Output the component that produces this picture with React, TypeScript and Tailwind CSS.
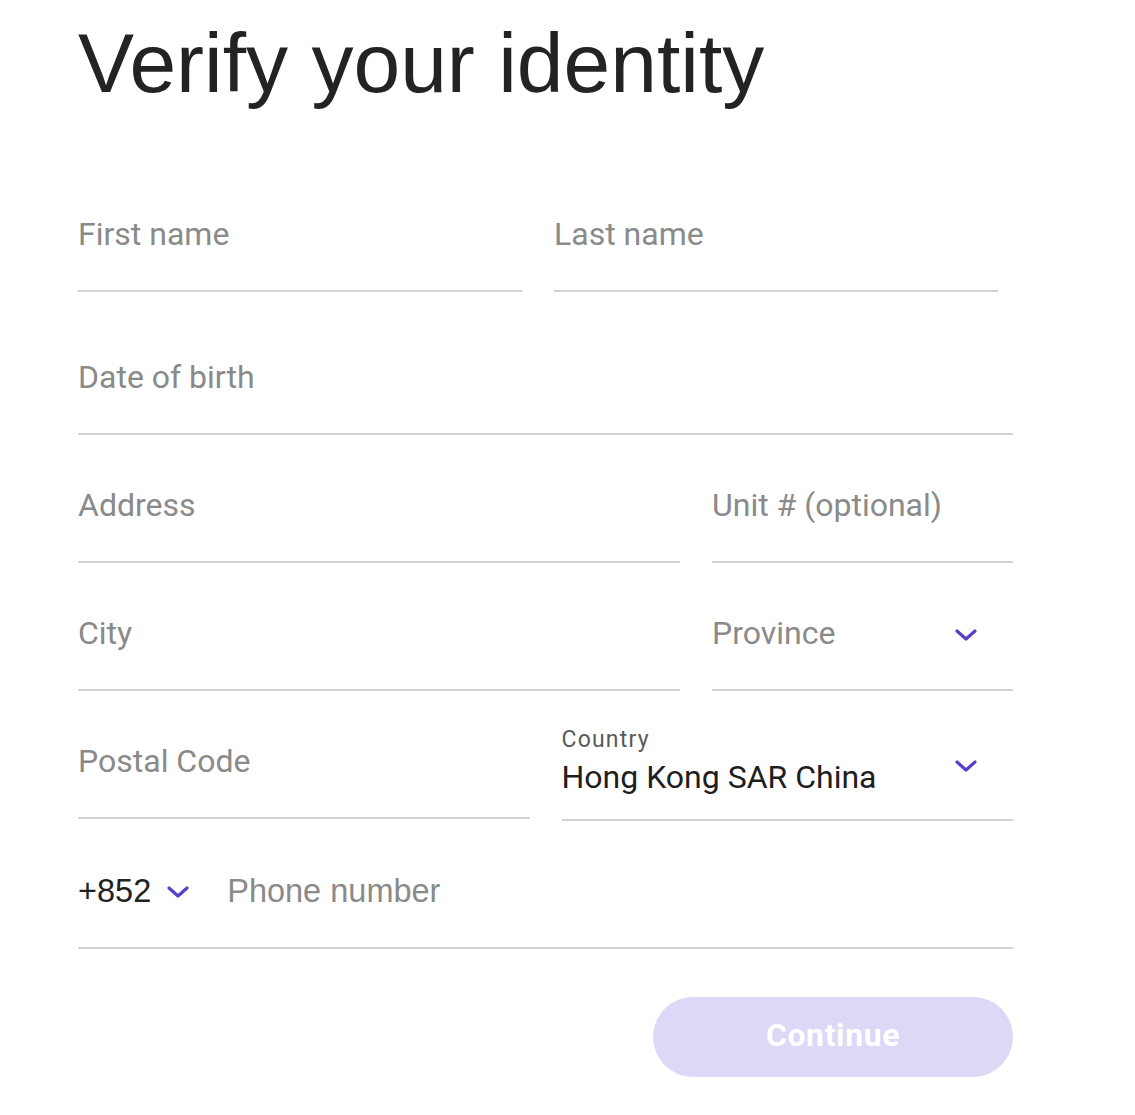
import React from "react";

const Chevron = ({ className = "" }: { className?: string }) => (
  <svg width="22" height="12" viewBox="0 0 22 12" className={className} fill="none">
    <path d="M2 2 L11 10 L20 2" stroke="#5a3fc8" strokeWidth="3.2" strokeLinecap="round" strokeLinejoin="round" />
  </svg>
);

const Field = ({ label, className = "", chevron = false }: { label: string; className?: string; chevron?: boolean }) => (
  <div className={`border-b-2 border-[#d3d3d3] pb-[36px] flex items-start ${className}`}>
    <span className="flex-1 text-[32px] leading-[40px] text-[#8a8a8a] [font-family:Roboto,'Noto_Sans',sans-serif]">
      {label}
    </span>
    {chevron && <Chevron className="mt-[16px] mr-[36px]" />}
  </div>
);

export default function App() {
  return (
    <div className="bg-white min-h-[1115px] w-[1135px] pl-[78px] pt-[21px]">
      <h1 className="text-[84px] leading-[84px] text-[#232323] [font-family:'Liberation_Sans',Arial,sans-serif] font-normal">
        Verify your identity
      </h1>
      <div className="w-[935px] mt-[109px] flex flex-col">
        <div className="w-[920px] grid grid-cols-2 gap-x-8">
          <Field label="First name" />
          <Field label="Last name" />
        </div>
        <div className="mt-[65px]">
          <Field label="Date of birth" />
        </div>
        <div className="mt-[50px] grid grid-cols-[1fr_301px] gap-x-8">
          <Field label="Address" />
          <Field label="Unit # (optional)" />
        </div>
        <div className="mt-[50px] grid grid-cols-[1fr_301px] gap-x-8">
          <Field label="City" />
          <Field label="Province" chevron />
        </div>
        <div className="mt-[50px] grid grid-cols-2 gap-x-8 items-start">
          <Field label="Postal Code" />
          <div className="-mt-[14px] border-b-2 border-[#d3d3d3] pb-[22px] flex items-start">
            <div className="flex-1 flex flex-col gap-[4px] [font-family:Roboto,'Noto_Sans',sans-serif]">
              <span className="text-[23px] leading-[26px] text-[#5a5a5a] tracking-[1.2px]">Country</span>
              <span className="text-[32px] leading-[40px] text-[#1e1e1e]">Hong Kong SAR China</span>
            </div>
            <Chevron className="mt-[33px] mr-[36px]" />
          </div>
        </div>
        <div className="mt-[50px] border-b-2 border-[#d3d3d3] pb-[36px] flex items-center [font-family:'Liberation_Sans',Arial,sans-serif]">
          <span className="text-[32.5px] leading-[40px] text-[#222]">+852</span>
          <Chevron className="ml-[16px] mt-[2px]" />
          <span className="ml-[38px] text-[32.5px] leading-[40px] text-[#8a8a8a]">Phone number</span>
        </div>
        <div className="mt-[48px] flex justify-end">
          <button className="w-[360px] h-[80px] rounded-full bg-[#dcd8f6] text-white text-[32px] leading-[40px] tracking-[0.6px] font-bold pb-[4px] [font-family:Roboto,'Noto_Sans',sans-serif]">
            Continue
          </button>
        </div>
      </div>
    </div>
  );
}
